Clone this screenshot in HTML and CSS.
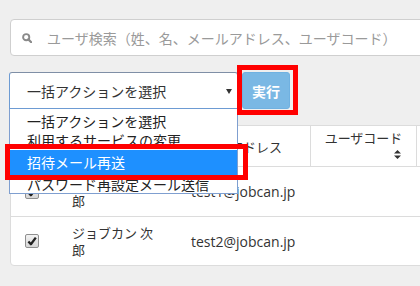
FILE: index.html
```html
<!DOCTYPE html>
<html lang="ja">
<head>
<meta charset="utf-8">
<title>ユーザ一覧</title>
<link rel="stylesheet" href="styles.css">
</head>
<body>
<div class="page">
  <div class="search">
    <svg class="search-icon" width="10" height="10" viewBox="0 0 10 10"><circle cx="4.2" cy="4.2" r="3.1" fill="none" stroke="#8a8a8a" stroke-width="1.9"/><path d="M6.4 6.4 L9.2 9.2" stroke="#8a8a8a" stroke-width="2.2" stroke-linecap="round"/></svg>
    <span class="ph">ユーザ検索（姓、名、メールアドレス、ユーザコード）</span>
  </div>

  <div class="bulk">
    <div class="select-wrap">
      <div class="select">
        <span>一括アクションを選択</span>
        <svg class="arrow" width="6" height="5" viewBox="0 0 6 5"><path d="M0 0 H6 L3 5 Z" fill="#333"/></svg>
      </div>
      <ul class="listbox">
        <li class="opt">一括アクションを選択</li>
        <li class="opt">利用するサービスの変更</li>
        <li class="opt sel">招待メール再送</li>
        <li class="opt last">パスワード再設定メール送信</li>
      </ul>
    </div>
    <button class="exec">実行</button>
  </div>

  <div class="panel">
    <div class="row head">
      <div class="cell"></div>
      <div class="cell"></div>
      <div class="cell th-mail">メールアドレス</div>
      <div class="cell th-code">
        <div class="th-text">ユーザコード</div>
        <div class="th-sort"><svg width="7" height="9" viewBox="0 0 7 9"><path d="M0 3.6 L3.5 0 L7 3.6 Z M0 5.4 L3.5 9 L7 5.4 Z" fill="#333"/></svg></div>
      </div>
      <div class="cell th-more"></div>
    </div>
    <div class="row body-row first">
      <div class="cell c-check"><span class="cb"><svg width="12" height="12" viewBox="0 0 12 12"><path d="M2.4 6.4 L4.9 9.2 L9.8 2.6" fill="none" stroke="#222" stroke-width="2.3" stroke-linejoin="round"/></svg></span></div>
      <div class="cell c-name">ジョブカン 太郎</div>
      <div class="cell c-mail">test1@jobcan.jp</div>
      <div class="cell"></div>
      <div class="cell"></div>
    </div>
    <div class="row body-row">
      <div class="cell c-check"><span class="cb"><svg width="12" height="12" viewBox="0 0 12 12"><path d="M2.4 6.4 L4.9 9.2 L9.8 2.6" fill="none" stroke="#222" stroke-width="2.3" stroke-linejoin="round"/></svg></span></div>
      <div class="cell c-name">ジョブカン 次郎</div>
      <div class="cell c-mail">test2@jobcan.jp</div>
      <div class="cell"></div>
      <div class="cell"></div>
    </div>
  </div>

  <div class="mark mark-exec"></div>
  <div class="mark mark-opt"></div>
</div>
</body>
</html>
```

FILE: styles.css
```css
html, body {
  margin: 0;
  padding: 0;
  height: 100%;
  overflow: hidden;
  background: #efefef;
}

.page {
  position: relative;
  padding: 19px 0 0 10px;
  font-family: "Open Sans", "Noto Sans CJK JP", sans-serif;
  color: #333;
}

/* search */
.search {
  box-sizing: border-box;
  width: 440px;
  height: 37px;
  border: 1px solid #cfcfcf;
  border-radius: 4px;
  background: #fff;
  display: flex;
  align-items: center;
  padding-left: 11px;
}
.search-icon {
  flex: none;
  margin-right: 15px;
}
.ph {
  font-family: "Noto Sans CJK JP", sans-serif;
  font-size: 14px;
  line-height: 18px;
  color: #9a9a9a;
  white-space: nowrap;
}

/* bulk action */
.bulk {
  display: flex;
  gap: 4px;
  margin-top: 16px;
  margin-left: -1px;
}
.select-wrap {
  position: relative;
  width: 229px;
  z-index: 2;
}
.select {
  box-sizing: border-box;
  height: 37px;
  border: 1px solid #6d9bd3;
  border-top-color: #7f8fa6;
  border-radius: 3px 3px 0 0;
  background: #fff;
  display: flex;
  align-items: center;
  justify-content: space-between;
  padding: 0 5px 0 17px;
  font-family: "Noto Sans CJK JP", sans-serif;
  font-size: 14px;
  line-height: 18px;
  color: #333;
}
.arrow {
  margin-top: 1px;
}
.listbox {
  position: absolute;
  top: 37px;
  left: 0;
  box-sizing: border-box;
  width: 229px;
  margin: 0;
  padding: 3px 0 0;
  list-style: none;
  background: #fff;
  border: 1px solid #7f9fd0;
  border-top: 0;
  font-family: "Noto Sans CJK JP", sans-serif;
  font-size: 14px;
  color: #222;
}
.opt {
  height: 19px;
  line-height: 19px;
  padding-left: 17px;
  white-space: nowrap;
}
.opt.sel {
  height: 25px;
  line-height: 25px;
  background: #1e90ff;
  color: #fff;
}
.opt.last {
  height: 18px;
  line-height: 18px;
}

.exec {
  box-sizing: border-box;
  width: 48px;
  height: 37px;
  padding: 0;
  border: 1px solid #70b1e1;
  border-radius: 3px;
  background: #7ab8e4;
  color: #fff;
  font-family: "Noto Sans CJK JP", sans-serif;
  font-size: 14px;
  font-weight: bold;
}

/* table panel */
.panel {
  margin-top: 16px;
  width: 440px;
  border: 1px solid #dcdcdc;
  border-radius: 4px;
  background: #fff;
  overflow: hidden;
}
.row {
  display: grid;
  grid-template-columns: 45px 119px 135px 106px 1fr;
}
.head {
  height: 40px;
  border-bottom: 1px solid #dcdcdc;
  font-family: "Noto Sans CJK JP", sans-serif;
  font-size: 13px;
  color: #333;
}
.head .cell {
  display: flex;
  align-items: center;
}
.th-mail {
  padding-left: 16px;
  line-height: 17px;
  white-space: nowrap;
}
.th-code {
  border-left: 1px solid #dcdcdc;
  flex-direction: column;
  justify-content: center;
}
.th-text {
  line-height: 17px;
  text-align: center;
  align-self: center;
}
.th-sort {
  height: 17px;
  display: flex;
  align-items: center;
  align-self: flex-end;
  margin-right: 15px;
}
.th-more {
  border-left: 1px solid #dcdcdc;
}

.body-row {
  height: 48px;
}
.body-row.first {
  height: 49px;
  border-bottom: 1px solid #dcdcdc;
}
.body-row .cell {
  display: flex;
  align-items: center;
}
.c-check {
  padding-left: 14px;
}
.cb {
  box-sizing: border-box;
  width: 14px;
  height: 14px;
  border: 1px solid #8f8f8f;
  border-radius: 2px;
  background: linear-gradient(#f3f3f3, #d6d6d6);
  display: flex;
  align-items: center;
  justify-content: center;
}
.c-name {
  padding: 0 16px;
  font-family: "Noto Sans CJK JP", sans-serif;
  font-size: 13px;
  line-height: 17px;
  color: #333;
}
.c-mail {
  padding-left: 16px;
  font-size: 14px;
  color: #333;
  white-space: nowrap;
}

/* annotation boxes */
.mark {
  position: absolute;
  box-sizing: border-box;
  border: 5px solid #ff0000;
  z-index: 5;
  pointer-events: none;
}
.mark-exec {
  left: 237px;
  top: 65px;
  width: 61px;
  height: 50px;
}
.mark-opt {
  left: 5px;
  top: 144px;
  width: 243px;
  height: 36px;
}
```
